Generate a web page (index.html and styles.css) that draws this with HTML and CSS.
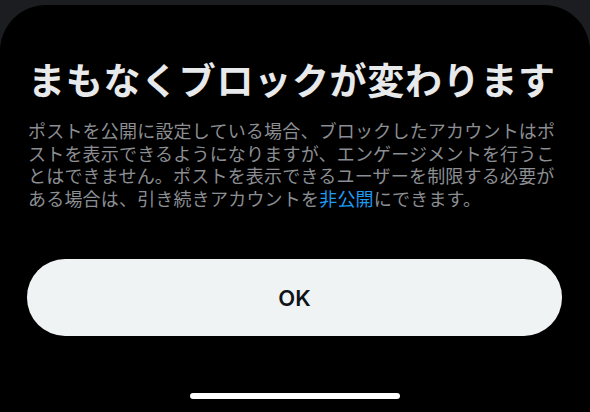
FILE: index.html
```html
<!DOCTYPE html>
<html lang="ja">
<head>
<meta charset="utf-8">
<link rel="stylesheet" href="styles.css">
</head>
<body>
<div class="screen">
  <div class="sheet">
    <h1 class="title">まもなくブロックが変わります</h1>
    <p class="desc"><span class="line">ポストを公開に設定している場合、ブロックしたアカウントはポ</span><span class="line">ストを表示できるようになりますが、エンゲージメントを行うこ</span><span class="line">とはできません。ポストを表示できるユーザーを制限する必要が</span><span class="line">ある場合は、引き続きアカウントを<span class="link">非公開</span>にできます。</span></p>
    <button class="ok">OK</button>
    <div class="home-indicator"></div>
  </div>
</div>
</body>
</html>
```

FILE: styles.css
```css
html, body {
  margin: 0;
  padding: 0;
  background: #1c1d21;
}
.screen {
  width: 590px;
  height: 412px;
  display: flex;
  flex-direction: column;
  padding-top: 5px;
  box-sizing: border-box;
  overflow: hidden;
  font-family: "Noto Sans CJK JP", "Noto Sans", sans-serif;
}
.sheet {
  flex: 1;
  background: #000;
  border-radius: 46px 46px 0 0;
  padding: 52px 28px 0 27px;
  display: flex;
  flex-direction: column;
}
.title {
  margin: 0 0 0 1px;
  font-size: 37px;
  line-height: 44px;
  font-weight: 700;
  letter-spacing: 0.7px;
  color: #e7e9ea;
  white-space: nowrap;
}
.desc {
  margin: 18px 0 0 1px;
  font-size: 18px;
  line-height: 22.6px;
  letter-spacing: 0.2px;
  color: #8b8e92;
  white-space: nowrap;
  display: flex;
  flex-direction: column;
}
.line {
  display: block;
  height: 22.6px;
}
.link {
  color: #1d9bf0;
}
.ok {
  margin-top: 50px;
  height: 77px;
  border: none;
  border-radius: 38px;
  background: #eff3f4;
  color: #0f1419;
  font-family: Inter, "Noto Sans", sans-serif;
  font-size: 22px;
  font-weight: 600;
  padding: 0;
}
.home-indicator {
  align-self: center;
  width: 210px;
  height: 6px;
  border-radius: 3px;
  background: #fff;
  margin-top: 57px;
  margin-left: 1px;
}
```
